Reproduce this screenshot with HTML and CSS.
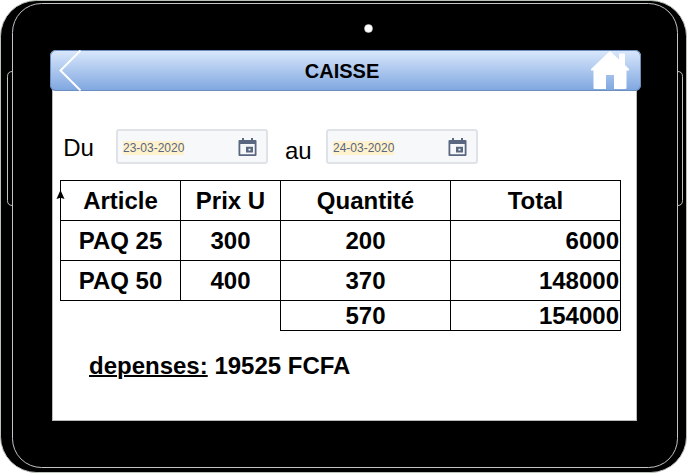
FILE: index.html
```html
<!DOCTYPE html>
<html lang="fr">
<head>
<meta charset="utf-8">
<title>Caisse</title>
<link rel="stylesheet" href="styles.css">
</head>
<body>
<main class="tablet">
  <svg class="casing" width="687" height="473" viewBox="0 0 687 473" aria-hidden="true">
    <rect class="shell" x=".5" y=".5" width="686" height="472" rx="36"/>
    <path class="edge" d="M12.500 71.500Q7.500 71.500 7.500 76.500V200.500Q7.500 205.500 12.500 205.500M677.500 71.500Q682.500 71.500 682.500 76.500V200.500Q682.500 205.500 677.500 205.500"/>
    <rect class="edge" x="12.500" y="3.500" width="665" height="464" rx="29"/>
    <circle class="camera" cx="368.500" cy="28.500" r="4"/>
  </svg>
  <section class="screen">
    <header class="bar">
      <svg class="back" width="24" height="41" viewBox="0 0 24 41"><path d="M21.500 .5 1.500 20.500 21.500 40.500"/></svg>
      <h1>CAISSE</h1>
      <svg class="home" width="38" height="38" viewBox="0 0 38 38"><path d="M19 0 28 8.500V3.500Q28 2.500 29 2.500H33Q34 2.500 34 3.500V14L38 18Q38.500 19.500 37 19.500H35.500V37Q35.500 38 34.500 38H23V24H15V38H3.500Q2.500 38 2.500 37V19.500H1Q-.5 19.500 0 18Z"/></svg>
    </header>
    <div class="content">
      <div class="period">
        <span class="label">Du</span>
        <div class="date"><span>23-03-2020</span>
          <svg width="19" height="18" viewBox="0 0 19 18"><path fill-rule="evenodd" d="M4 0H6V2H13V0H15V2H17.500Q18.500 2 18.500 3V17Q18.500 18 17.500 18H1.500Q.5 18 .5 17V3Q.5 2 1.500 2H4ZM2.300 6V16.300H16.700V6ZM8 8.700H15V14.500H8ZM10.500 10.700V12.500H12.500V10.700Z"/></svg>
        </div>
        <span class="label label-to">au</span>
        <div class="date"><span>24-03-2020</span>
          <svg width="19" height="18" viewBox="0 0 19 18"><path fill-rule="evenodd" d="M4 0H6V2H13V0H15V2H17.500Q18.500 2 18.500 3V17Q18.500 18 17.500 18H1.500Q.5 18 .5 17V3Q.5 2 1.500 2H4ZM2.300 6V16.300H16.700V6ZM8 8.700H15V14.500H8ZM10.500 10.700V12.500H12.500V10.700Z"/></svg>
        </div>
      </div>
      <div class="sales">
        <div class="cell">Article</div><div class="cell">Prix U</div><div class="cell">Quantité</div><div class="cell">Total</div>
        <div class="cell">PAQ 25</div><div class="cell">300</div><div class="cell">200</div><div class="cell amount">6000</div>
        <div class="cell">PAQ 50</div><div class="cell">400</div><div class="cell">370</div><div class="cell amount">148000</div>
        <div class="cell sum">570</div><div class="cell amount">154000</div>
        <svg class="arrow" width="9" height="10" viewBox="0 0 9 10"><path d="M4.500 0 8.500 9 4.500 7.800 .5 9Z"/></svg>
      </div>
      <p class="expenses"><u>depenses:</u> 19525 FCFA</p>
    </div>
  </section>
</main>
</body>
</html>
```
FILE: styles.css
```css
* { box-sizing: border-box; }
body {
  margin: 0;
  background: #fff;
  color: #000;
  font-family: "Liberation Sans", Arial, sans-serif;
  overflow: hidden;
}
.tablet {
  position: relative;
  width: 687px;
  height: 473px;
  padding: 50px 50px 52px 52px;
}
.casing { position: absolute; inset: 0; z-index: -1; }
.shell { fill: #000; stroke: #bac2b8; }
.edge { fill: none; stroke: #c4c4c4; }
.camera { fill: #fff; stroke: #c4c4c4; stroke-width: .5; }
.screen {
  width: 585px;
  height: 371px;
  background: linear-gradient(transparent 8px, #fff 8px);
  border: 1px solid #bababa;
  border-top: 0;
  border-image: linear-gradient(transparent 8px, #bababa 8px) 1;
}
.bar {
  display: grid;
  grid-template-columns: 24px 1fr 38px;
  align-items: center;
  width: 591px;
  height: 41px;
  margin-left: -3px;
  padding: 0 12px 0 9px;
  border-radius: 6px;
  background: linear-gradient(#dae8fc, #7ea6e0);
  box-shadow: inset 0 0 0 1px #6c8ebf;
}
.bar h1 {
  margin: 0;
  padding-left: 10px;
  font-size: 20px;
  line-height: 24px;
  text-align: center;
}
.back path { fill: none; stroke: #fff; stroke-width: 2; }
.home { margin-top: -2px; fill: #fff; }
.content { padding: 38px 0 0 7px; }
.period { display: flex; height: 51px; }
.label {
  width: 55.500px;
  padding: 5px 0 0 3.200px;
  font-size: 24px;
  line-height: 28px;
}
.label-to { width: 58px; padding: 8px 0 0 17.500px; }
.date {
  display: flex;
  align-items: center;
  justify-content: space-between;
  width: 152px;
  height: 35px;
  padding: 0 9px 0 5.500px;
  border: 2px solid #dfe3e8;
  border-radius: 3px;
  background: #f6f8f9;
  color: #596780;
  font-size: 12px;
}
.date span { margin-top: 3px; line-height: 14px; background: #fff2cc; }
.date svg { margin: 1px 0 0; fill: #596780; }
.sales {
  position: relative;
  display: grid;
  grid-template-columns: 120px 100px 170px 170px;
  grid-template-rows: 40px 40px 40px 30px;
  font-size: 24px;
  font-weight: bold;
}
.cell {
  display: flex;
  align-items: center;
  justify-content: center;
  margin: 0 -1px -1px 0;
  border: 1px solid #000;
  line-height: 28px;
}
.amount { justify-content: flex-end; padding-right: 1px; }
.sum { grid-column: 3; }
.arrow { position: absolute; left: -4px; top: 10px; }
.expenses {
  margin: 22px 0 0 29px;
  font-size: 24px;
  font-weight: bold;
  line-height: 28px;
}
.expenses u { text-decoration-thickness: 2px; }
```
